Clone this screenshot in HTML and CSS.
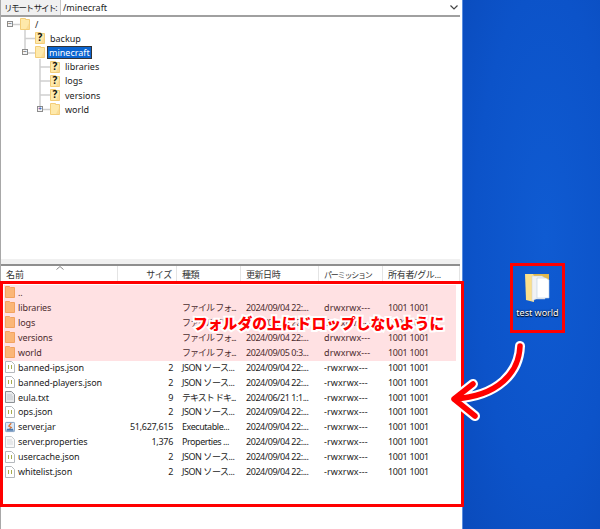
FILE: index.html
```html
<!DOCTYPE html>
<html lang="ja">
<head>
    <meta charset="UTF-8">
    <title>リモートサイト</title>
    <link rel="stylesheet" href="styles.css">
</head>
<body>
    <svg class="defs" width="0" height="0">
        <symbol id="folder" viewBox="0 0 10 12">
            <path d="M.5 11.5V.5h5v1h4v10z" fill="#fee9ab" stroke="#f3cd78"/>
            <path d="M6 11h4V3z" fill="#f7d488" opacity=".6"/>
        </symbol>
        <symbol id="folder-list" viewBox="0 0 10 12">
            <path d="M.5 11.5V.5h4l1 1h4v10z" fill="#fbcb7c" stroke="#f0b25e"/>
        </symbol>
        <symbol id="page-json" viewBox="0 0 10 12">
            <path d="M.5.5h6l3 3v8h-9z" fill="#fff" stroke="#b4b8bc"/>
            <path d="M3.500 4v4M6.500 4v4" stroke="#a8ac50" fill="none"/>
        </symbol>
        <symbol id="page-text" viewBox="0 0 10 12">
            <path d="M.5.5h6l3 3v8h-9z" fill="#e6e8ea" stroke="#8c9094"/>
            <path d="M2 4h5M2 6h6M2 8h6" stroke="#c4c8cc"/>
        </symbol>
        <symbol id="page-props" viewBox="0 0 10 12">
            <path d="M.5.5h6l3 3v8h-9z" fill="#f8f8f8" stroke="#c4c8cc"/>
            <path d="M2 4h5M2 6h6M2 8h6" stroke="#d4d8dc"/>
        </symbol>
        <symbol id="jar" viewBox="0 0 12 12">
            <rect x=".5" y=".5" width="11" height="11" rx="1" fill="#dce8f6" stroke="#6d8fb8"/>
            <path d="M7.500 1.500 4.500 5l3 1.500L5.500 8" stroke="#d8702c" fill="none" stroke-width="1.4"/>
            <path d="M2.500 8h7l1 2.500h-9z" fill="#4a78ac"/>
        </symbol>
    </svg>

    <main class="window">
        <div class="address">
            <span class="address-label">リモート サイト:</span>
            <span class="address-path">/minecraft</span>
            <svg class="address-caret" width="8" height="5" viewBox="0 0 8 5"><path d="M.5.5 4 4 7.5.5" fill="none" stroke="#444" stroke-width="1.2"/></svg>
        </div>

        <div class="tree">
            <svg class="tree-lines" width="60" height="110" viewBox="0 0 60 110">
                <path d="M13 7.500H20M25 13V34M25 21.500H35M28 36H35M40 42V93M40 50H50M40 64H50M40 78H50M43 92.500H50" fill="none" stroke="#cfcfcf" stroke-width="1.500"/>
            </svg>
            <div class="tree-row depth-0">
                <span class="expander">−</span>
                <span class="tree-icon"><svg class="icon"><use href="#folder"/></svg></span>
                <span class="tree-name">/</span>
            </div>
            <div class="tree-row depth-1">
                <span class="expander blank"></span>
                <span class="tree-icon"><svg class="icon"><use href="#folder"/></svg><b class="unknown">?</b></span>
                <span class="tree-name">backup</span>
            </div>
            <div class="tree-row depth-1">
                <span class="expander">−</span>
                <span class="tree-icon"><svg class="icon"><use href="#folder"/></svg></span>
                <span class="tree-name selected">minecraft</span>
            </div>
            <div class="tree-row depth-2">
                <span class="expander blank"></span>
                <span class="tree-icon"><svg class="icon"><use href="#folder"/></svg><b class="unknown">?</b></span>
                <span class="tree-name">libraries</span>
            </div>
            <div class="tree-row depth-2">
                <span class="expander blank"></span>
                <span class="tree-icon"><svg class="icon"><use href="#folder"/></svg><b class="unknown">?</b></span>
                <span class="tree-name">logs</span>
            </div>
            <div class="tree-row depth-2">
                <span class="expander blank"></span>
                <span class="tree-icon"><svg class="icon"><use href="#folder"/></svg><b class="unknown">?</b></span>
                <span class="tree-name">versions</span>
            </div>
            <div class="tree-row depth-2">
                <span class="expander plus">+</span>
                <span class="tree-icon"><svg class="icon"><use href="#folder"/></svg></span>
                <span class="tree-name">world</span>
            </div>
        </div>

        <div class="splitter"><svg class="sort-mark" width="8" height="4" viewBox="0 0 8 4"><path d="M.5 3.500 4 .5l3.500 3" fill="none" stroke="#8a8a8a"/></svg></div>

        <div class="list-head list-grid">
            <span>名前</span>
            <span class="num">サイズ</span>
            <span>種類</span>
            <span>更新日時</span>
            <span class="perm-head">パーミッション</span>
            <span>所有者/グル...</span>
        </div>

        <div class="list">
            <div class="list-row list-grid"><span class="file"><svg class="icon"><use href="#folder-list"/></svg>..</span><span></span><span></span><span></span><span></span><span></span></div>
            <div class="list-row list-grid"><span class="file"><svg class="icon"><use href="#folder-list"/></svg>libraries</span><span></span><span class="kana">ファイル フォ...</span><span>2024/09/04 22:...</span><span>drwxrwx---</span><span>1001 1001</span></div>
            <div class="list-row list-grid"><span class="file"><svg class="icon"><use href="#folder-list"/></svg>logs</span><span></span><span class="kana">ファイル フォ...</span><span>2024/09/04 22:...</span><span>drwxrwx---</span><span>1001 1001</span></div>
            <div class="list-row list-grid"><span class="file"><svg class="icon"><use href="#folder-list"/></svg>versions</span><span></span><span class="kana">ファイル フォ...</span><span>2024/09/04 22:...</span><span>drwxrwx---</span><span>1001 1001</span></div>
            <div class="list-row list-grid"><span class="file"><svg class="icon"><use href="#folder-list"/></svg>world</span><span></span><span class="kana">ファイル フォ...</span><span>2024/09/05 0:3...</span><span>drwxrwx---</span><span>1001 1001</span></div>
            <div class="list-row list-grid"><span class="file"><svg class="icon"><use href="#page-json"/></svg>banned-ips.json</span><span class="num">2</span><span>JSON ソース...</span><span>2024/09/04 22:...</span><span>-rwxrwx---</span><span>1001 1001</span></div>
            <div class="list-row list-grid"><span class="file"><svg class="icon"><use href="#page-json"/></svg>banned-players.json</span><span class="num">2</span><span>JSON ソース...</span><span>2024/09/04 22:...</span><span>-rwxrwx---</span><span>1001 1001</span></div>
            <div class="list-row list-grid"><span class="file"><svg class="icon"><use href="#page-text"/></svg>eula.txt</span><span class="num">9</span><span class="kana">テキスト ドキ...</span><span>2024/06/21 1:1...</span><span>-rwxrwx---</span><span>1001 1001</span></div>
            <div class="list-row list-grid"><span class="file"><svg class="icon"><use href="#page-json"/></svg>ops.json</span><span class="num">2</span><span>JSON ソース...</span><span>2024/09/04 22:...</span><span>-rwxrwx---</span><span>1001 1001</span></div>
            <div class="list-row list-grid"><span class="file"><svg class="icon"><use href="#jar"/></svg>server.jar</span><span class="num">51,627,615</span><span>Executable...</span><span>2024/09/04 22:...</span><span>-rwxrwx---</span><span>1001 1001</span></div>
            <div class="list-row list-grid"><span class="file"><svg class="icon"><use href="#page-props"/></svg>server.properties</span><span class="num">1,376</span><span>Properties ...</span><span>2024/09/04 22:...</span><span>-rwxrwx---</span><span>1001 1001</span></div>
            <div class="list-row list-grid"><span class="file"><svg class="icon"><use href="#page-json"/></svg>usercache.json</span><span class="num">2</span><span>JSON ソース...</span><span>2024/09/04 22:...</span><span>-rwxrwx---</span><span>1001 1001</span></div>
            <div class="list-row list-grid"><span class="file"><svg class="icon"><use href="#page-json"/></svg>whitelist.json</span><span class="num">2</span><span>JSON ソース...</span><span>2024/09/04 22:...</span><span>-rwxrwx---</span><span>1001 1001</span></div>
        </div>
    </main>

    <div class="desktop"></div>

    <!-- annotations drawn over the screenshot -->
    <div class="note-shade"></div>
    <div class="note-frame"></div>
    <div class="note-text">フォルダの上にドロップしないように</div>

    <div class="desktop-icon">
        <svg class="big-folder" width="25" height="31" viewBox="0 0 25 31">
            <path d="M8 1h16v24H8z" fill="#e0b84c"/>
            <path d="M0 1h8l1 2v26l-8-2z" fill="#fbe08c"/>
            <path d="M7 3h10l3 2v21H11l-4 2z" fill="#f1f2f4" stroke="#c8ccd2" stroke-width=".5"/>
            <path d="M12 5h9l3 2v18H12z" fill="#fff" stroke="#b8cde0" stroke-width=".6"/>
        </svg>
        <span class="desktop-label">test world</span>
    </div>

    <svg class="note-arrow" width="90" height="90" viewBox="0 0 90 90">
        <g fill="none" stroke-linecap="round" stroke-linejoin="round">
            <path d="M71 6C70 32 50 56 5 59M24 44 5 59 26 76" stroke="#fff" stroke-width="10"/>
            <path d="M71 6C70 32 50 56 5 59M24 44 5 59 26 76" stroke="#f00" stroke-width="5.500"/>
        </g>
    </svg>
</body>
</html>
```

FILE: styles.css
```css
* {
    box-sizing: border-box;
}
html, body {
    margin: 0;
    height: 100%;
}
body {
    display: flex;
    position: relative;
    overflow: hidden;
    font-family: "Noto Sans", "Noto Sans CJK JP", sans-serif;
    font-size: 9px;
    color: #1c1c1c;
    background: #fff;
}
.defs {
    position: absolute;
}
.icon {
    width: 10px;
    height: 12px;
    flex: none;
}

/* window */
.window {
    width: 462px;
    height: 529px;
    flex: none;
    display: flex;
    flex-direction: column;
    border-left: 1px solid #a8a8a8;
    padding-right: 2px;
}
.address {
    height: 17px;
    flex: none;
    display: flex;
    align-items: center;
    border-bottom: 2px solid #a0a0a0;
}
.address-label {
    width: 60px;
    height: 15px;
    flex: none;
    padding-left: 3px;
    font-size: 8.5px;
    line-height: 15px;
    letter-spacing: -1.3px;
    background: #f0f0f0;
    border-right: 1px solid #c8c8c8;
    white-space: nowrap;
    overflow: hidden;
}
.address-path {
    flex: 1;
    padding-left: 2px;
}
.address-caret {
    margin-right: 2px;
}

/* directory tree */
.tree {
    height: 242px;
    flex: none;
    position: relative;
}
.tree-lines {
    position: absolute;
    left: -1px;
    top: 0;
}
.tree-row {
    height: 14.2px;
    display: flex;
    align-items: center;
    position: relative;
}
.depth-0 {
    padding-left: 6px;
}
.depth-1 {
    padding-left: 21px;
}
.depth-2 {
    padding-left: 36px;
}
.expander {
    width: 6px;
    height: 6px;
    margin-right: 7px;
    flex: none;
    border: 1px solid #8c8c8c;
    background: #f4f4f4;
    font-size: 7px;
    line-height: 4px;
    text-align: center;
    color: #333;
}
.expander.blank {
    visibility: hidden;
}
.expander.plus {
    color: #2030a0;
}
.tree-icon {
    width: 10px;
    height: 12px;
    flex: none;
    position: relative;
    margin-right: 4px;
}
.unknown {
    position: absolute;
    left: 0;
    right: 0;
    top: -1px;
    text-align: center;
    font-size: 10px;
    line-height: 13px;
    font-weight: 700;
    color: #111;
}
.tree-name {
    padding: 0 1px;
}
.tree-name.selected {
    margin-left: -2px;
    padding: 0 1px;
    height: 13px;
    line-height: 11px;
    background: #0a64d0;
    border: 1px solid #333;
    color: #fff;
}

.splitter {
    height: 7px;
    flex: none;
    position: relative;
    background: #f0f0f0;
    border-bottom: 2px solid #8e8e8e;
}
.sort-mark {
    position: absolute;
    left: 55px;
    bottom: -6px;
}

/* file list */
.list-grid {
    display: grid;
    grid-template-columns: 117px 59px 64px 78px 64px 1fr;
    align-items: center;
}
.list-grid > span {
    padding-left: 5px;
    white-space: nowrap;
    letter-spacing: -0.1px;
}
.list-grid > .num {
    padding: 0 4px 0 0;
    text-align: right;
    letter-spacing: -0.3px;
}
.list-grid > span:nth-child(3) {
    letter-spacing: -0.45px;
}
.list-grid > .kana:nth-child(3) {
    letter-spacing: -1px;
}
.list-grid > span:nth-child(4) {
    letter-spacing: -0.45px;
}
.list-grid > span:nth-child(5) {
    letter-spacing: 0.1px;
}
.list-grid > span:nth-child(6) {
    letter-spacing: -0.3px;
}
.list-head {
    height: 18px;
    flex: none;
    color: #333;
}
.list-head > span {
    height: 18px;
    line-height: 18px;
    border-right: 1px solid #e4e4e4;
}
.list-grid > .perm-head:nth-child(5) {
    font-size: 8px;
    letter-spacing: -1.2px;
}
.list {
    padding-top: 1px;
}
.list-row {
    height: 14.95px;
}
.list-row > .file {
    display: flex;
    align-items: center;
    gap: 3px;
    padding-left: 4px;
}

/* desktop */
.desktop {
    flex: 1;
    border-left: 1px solid #5a8ee0;
    background: radial-gradient(ellipse at 60% 45%, #0f5bd2 0%, #0c53c9 60%, #0a4bbc 100%);
}
.desktop-icon {
    position: absolute;
    left: 510px;
    top: 263px;
    width: 55px;
    height: 70px;
    border: 3px solid #f00;
    display: flex;
    flex-direction: column;
    align-items: center;
    padding-top: 7px;
    color: #fff;
}
.desktop-label {
    margin-top: 2px;
    white-space: nowrap;
    text-shadow: 0 1px 1px #000, 0 0 2px #000;
}

/* annotations */
.note-shade {
    position: absolute;
    left: 4px;
    top: 285px;
    width: 452px;
    height: 76px;
    background: rgba(255, 90, 100, 0.18);
}
.note-frame {
    position: absolute;
    left: 0;
    top: 281px;
    width: 464px;
    height: 226px;
    border: 3px solid #f00;
}
.note-text {
    position: absolute;
    left: 193px;
    top: 312px;
    font-size: 14.8px;
    line-height: 22px;
    font-weight: 900;
    white-space: nowrap;
    color: #f00;
    -webkit-text-stroke: 4px #fff;
    paint-order: stroke fill;
}
.note-arrow {
    position: absolute;
    left: 449px;
    top: 340px;
}
```
